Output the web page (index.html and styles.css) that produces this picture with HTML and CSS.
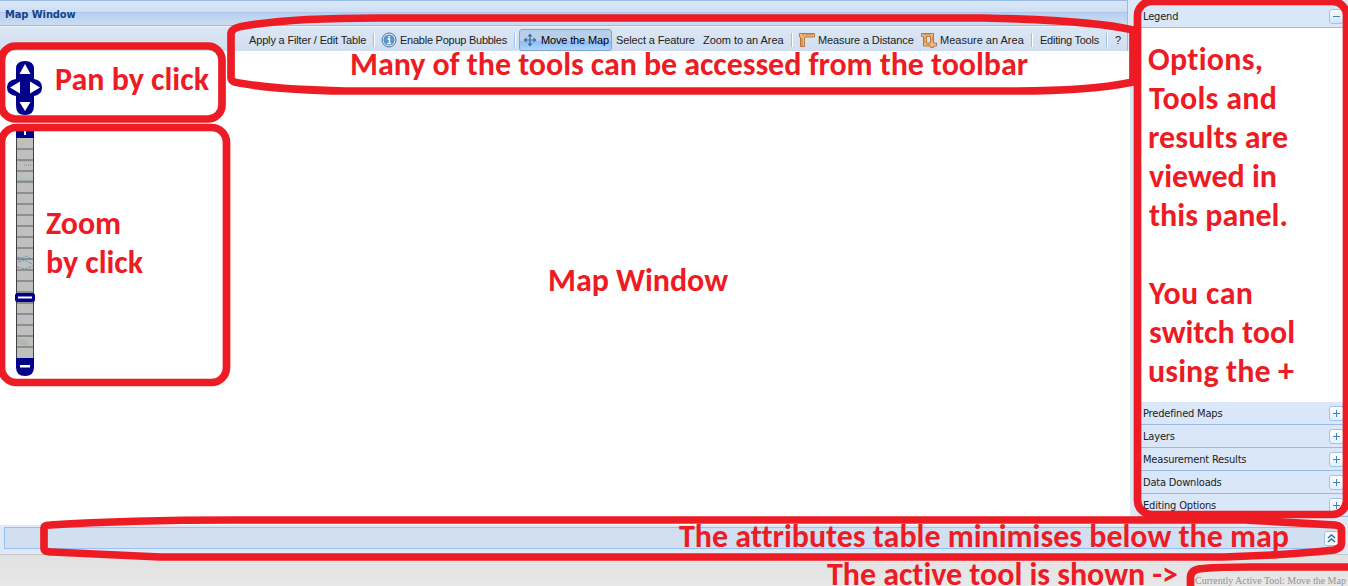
FILE: index.html
```html
<!DOCTYPE html>
<html lang="en">
<head>
<meta charset="utf-8">
<title>Map Window</title>
<link rel="stylesheet" href="styles.css">
</head>
<body>
<div class="app">
  <div class="main">
    <section class="map-panel">
      <header class="titlebar">Map Window</header>
      <nav class="toolbar">
        <span class="tool w-filter"><span>Apply a Filter / Edit Table</span></span>
        <i class="sep"></i>
        <span class="tool w-popup">
          <svg class="icon" viewBox="0 0 16 16"><circle cx="8" cy="8" r="7" fill="#e4eff9" stroke="#3f73a6" stroke-width="1"/><circle cx="8" cy="8" r="5.600" fill="#5f93c6"/><path d="M6.500 7H8.500v4.500M6.300 11.500h3.700M7.300 4.800h1.700" fill="none" stroke="#fff" stroke-width="1.400"/></svg>
          <span>Enable Popup Bubbles</span></span>
        <i class="sep"></i>
        <span class="tool w-move active">
          <svg class="icon" viewBox="0 0 16 16"><path d="M8 3v10M3 8h10" stroke="#386a9b" stroke-width="1.200"/><path d="M8 1.500l2.500 3h-5zM8 14.500l2.500-3h-5zM1.500 8l3-2.500v5zM14.500 8l-3-2.500v5z" fill="#386a9b"/></svg>
          <span>Move the Map</span></span>
        <span class="tool w-select"><span>Select a Feature</span></span>
        <span class="tool w-zoom"><span>Zoom to an Area</span></span>
        <i class="sep"></i>
        <span class="tool w-distance">
          <svg class="icon" viewBox="0 0 16 16"><path d="M.5 1.500h15v3.500h-10v9.500h-4v-9.500h-1z" fill="#edbd83" stroke="#bd763a"/><path d="M4 2v2M7 2v1.500M9 2v1.500M11 2v1.500M13 2v1.500M2 7h2M2 9h2M2 11h2M2 13h2" stroke="#a66329" stroke-width=".8"/></svg>
          <span>Measure a Distance</span></span>
        <span class="tool w-area">
          <svg class="icon" viewBox="0 0 16 16"><path d="M.5 1.500h12v9.500h3v3h-3v1.500h-3v-1.500h-7V4.500h-2zM5.500 4.500v6.500h4V4.500z" fill="#edbd83" fill-rule="evenodd" stroke="#bd763a"/><path d="M3 2v1M5 2v1.500M7 2v1M9 2v1.500M3 6h1.500M3 8h1M3 10h1.500M6 12v1M8 12v1.500M11 5h1M10.500 7h1.500M11 9h1" stroke="#a66329" stroke-width=".8"/></svg>
          <span>Measure an Area</span></span>
        <i class="sep"></i>
        <span class="tool w-editing"><span>Editing Tools</span></span>
        <i class="sep"></i>
        <span class="tool w-help"><span>?</span></span>
      </nav>
      <div class="map">
        <svg class="controls" viewBox="0 1 50 340">
          <path d="M16 20v-1q0-8 9-8t9 8v10q8 1 8 8.500t-8 8.500V56q0 9-9 9t-9-9V46q-9-1-9-8.500T16 29z" fill="#00008b"/>
          <path d="M25 14l5.500 10h-11zM25 61l5.500-9h-11zM10 37.500l10-6v12zM40 37.500l-10-6v12z" fill="#fff"/>
          <path d="M16 88v-8q0-6 9-6t9 6v8zM16 308h18v9q0 9-9 9t-9-9z" fill="#00008b"/>
          <path d="M24 75h2v10h-2zM20.500 79h9v2h-9zM20 315h10v2.500H20z" fill="#fff"/>
          <path d="M16 88h18v220H16z" fill="#bfbfbf"/>
          <path d="M17 97l5-3 4-6M17 160l8-3 7-7M24 254l9 3" fill="none" stroke="#c9bd88" stroke-dasharray="2 1"/>
          <path d="M20 111h12M24 115h7" stroke="#8a8a8a" stroke-dasharray="1 1"/>
          <path d="M17 207l5 1 4-2 6 3M18 212l7-2 7 4M17 217l8 2 8-3" fill="none" stroke="#729aaa" stroke-dasharray="3 1"/>
          <path d="M17 288l11 3v5l-11-2z" fill="#b0b9ad"/>
          <path d="M17 99h16m-16 11h16m-16 11h16m-16 11h16m-16 11h16m-16 11h16m-16 11h16m-16 11h16m-16 11h16m-16 11h16m-16 11h16m-16 11h16m-16 11h16m-16 11h16m-16 11h16m-16 11h16m-16 11h16m-16 11h16m-16 11h16" stroke="#7f7f7f" stroke-width="1.700"/>
          <path d="M17 131h16M17 209h16" stroke="#6d94a4"/>
          <path d="M16.500 88v220M33.500 88v220" stroke="#424242"/>
          <rect x="15" y="243" width="20" height="9" rx="2.500" fill="#00008b"/><path d="M18 246.500h14v2H18z" fill="#fff"/>
        </svg>
      </div>
    </section>
    <aside class="side">
      <div class="row"><span>Legend</span><b class="toggle minus"></b></div>
      <div class="legend-body"></div>
      <div class="row"><span>Predefined Maps</span><b class="toggle"></b></div>
      <div class="row"><span>Layers</span><b class="toggle"></b></div>
      <div class="row"><span>Measurement Results</span><b class="toggle"></b></div>
      <div class="row"><span>Data Downloads</span><b class="toggle"></b></div>
      <div class="row"><span>Editing Options</span><b class="toggle"></b></div>
    </aside>
  </div>
  <div class="attributes"><div class="collapsed">
    <svg class="expand" viewBox="0 0 15 15"><rect x=".5" y=".5" width="14" height="14" rx="2" fill="#f3f8fe" stroke="#a3c2ea"/><path d="M4 7l3.500-3L11 7M4 11l3.500-3 3.500 3" fill="none" stroke="#386c9b" stroke-width="1.500"/></svg>
  </div></div>
  <footer class="status"><span>Currently Active Tool: Move the Map</span></footer>

  <svg class="notes" viewBox="0 0 1348 586">
    <g class="outlines">
      <rect x="1.500" y="46" width="220.500" height="73" rx="14"/>
      <rect x="1.500" y="127.500" width="225" height="255" rx="15"/>
      <path d="M231 78V34Q231 28 244 26Q290 18 377 18H983Q1090 20 1133 30V82Q1090 91 1016 91H345Q280 90 239 83Q231 82 231 78Z"/>
      <rect x="1137.500" y="1.500" width="209" height="513" rx="14"/>
      <path d="M44 548V528Q44 525 50 525Q130 520 233 520H1245L1335 525Q1341.500 526 1341.500 530V543Q1341.500 548 1334 550Q1290 555 1224 557H160L52 552Q44 552 44 548Z"/>
      <path d="M1190.500 590V577Q1191 569 1203 568.500Q1220 567 1250 567H1352"/>
    </g>
    <g class="captions">
      <text x="55" y="90" textLength="154">Pan by click</text>
      <text x="46" y="234" textLength="75">Zoom</text>
      <text x="46" y="273" textLength="97">by click</text>
      <text x="350" y="75" textLength="678">Many of the tools can be accessed from the toolbar</text>
      <text x="548" y="291" textLength="180">Map Window</text>
      <text x="1148" y="70" textLength="115">Options,</text>
      <text x="1149" y="109" textLength="128">Tools and</text>
      <text x="1148" y="148" textLength="140">results are</text>
      <text x="1149" y="187" textLength="128">viewed in</text>
      <text x="1149" y="226" textLength="139">this panel.</text>
      <text x="1149" y="304" textLength="104">You can</text>
      <text x="1149" y="343" textLength="146">switch tool</text>
      <text x="1148" y="382" textLength="146">using the +</text>
      <text x="679" y="547" textLength="610">The attributes table minimises below the map</text>
      <text x="827" y="585" textLength="351">The active tool is shown -&gt;</text>
    </g>
  </svg>
</div>
</body>
</html>
```
FILE: styles.css
```css
* { box-sizing: border-box; }
body { margin: 0; }
.app {
  position: relative;
  width: 1348px;
  height: 586px;
  overflow: hidden;
  display: flex;
  flex-direction: column;
  background: #dfe8f6;
  font: 11px/14px "Liberation Sans", Arial, sans-serif;
}
.main { display: flex; height: 525px; }
.map-panel { width: 1130px; display: flex; flex-direction: column; }
.titlebar {
  width: 1128px;
  height: 26px;
  padding: 6px 5px;
  border: solid #99bbe8;
  border-width: 1px 1px 1px 0;
  background: linear-gradient(#dae7f6, #cddef3 11px, #abc7ec 11px, #abc7ec 12px, #b8cfee 12px, #cbddf3);
  color: #15428b;
  font: bold 11px/15px "DejaVu Sans Condensed", Tahoma, sans-serif;
  letter-spacing: -.08px;
}
.toolbar {
  width: 1128px;
  height: 25px;
  padding: 1px 0 0 243px;
  display: flex;
  align-items: center;
  border-top: 1px solid #e9f1fb;
  border-right: 1px solid #99bbe8;
  background: linear-gradient(#dce7f4, #d0def0);
  color: #222;
  letter-spacing: -.12px;
}
.tool {
  height: 22px;
  display: flex;
  align-items: center;
  gap: 3px;
  padding-left: 6px;
  white-space: nowrap;
  flex: none;
}
.icon { width: 16px; height: 16px; flex: none; }
.active {
  margin-left: 3px;
  border: 1px solid #82a4cb;
  border-radius: 3px;
  background: linear-gradient(#b8cfea 0 55%, #8cbdf3 56%, #aed4fc);
  color: #000;
}
.w-filter { width: 130px; letter-spacing: -.16px; }
.w-popup { width: 139px; letter-spacing: -.25px; }
.w-move { width: 93px; padding-left: 2px; letter-spacing: -.15px; }
.w-select { width: 86px; padding-left: 4px; }
.w-zoom { width: 93px; padding-left: 5px; letter-spacing: -.05px; }
.w-distance { width: 122px; }
.w-area { width: 116px; letter-spacing: 0; }
.w-editing { width: 73px; padding-left: 7px; letter-spacing: -.25px; }
.w-help { width: 14px; padding-left: 7px; }
.sep {
  width: 2px;
  height: 14px;
  flex: none;
  border-left: 1px solid #98c0f4;
  border-right: 1px solid #fff;
}
.map { height: 474px; background: #fff; }
.controls { display: block; width: 50px; height: 340px; }
.side {
  width: 214px;
  margin-left: 4px;
  padding-top: 5px;
  display: flex;
  flex-direction: column;
  font: 11px/14px "DejaVu Sans Condensed", Tahoma, sans-serif;
  color: #222;
}
.row {
  height: 23px;
  flex: none;
  display: flex;
  align-items: center;
  justify-content: space-between;
  margin-left: 4px;
  padding: 0 4px 0 5px;
  border-bottom: 1px solid #99bbe8;
  background: #d9e7f8;
  letter-spacing: -.18px;
}
.row span { padding-top: 2px; }
.legend-body { height: 374px; flex: none; margin-left: 4px; background: #fff; }
.toggle {
  width: 15px;
  height: 15px;
  border: 1px solid #a3c2ea;
  border-radius: 3px;
  background:
    linear-gradient(#447fb7, #447fb7) center / 7px 1px no-repeat,
    linear-gradient(#447fb7, #447fb7) center / 1px 7px no-repeat,
    linear-gradient(#fff, #e3f0fc);
}
.minus {
  background:
    linear-gradient(#447fb7, #447fb7) center / 7px 1px no-repeat,
    linear-gradient(#fff, #cfe3f8);
}
.attributes { height: 29px; padding: 2px 4px 5px; }
.collapsed {
  height: 22px;
  display: flex;
  justify-content: flex-end;
  padding: 3px 4px;
  border: 1px solid #98c0f4;
  background: #d2dff0;
}
.expand { width: 15px; height: 15px; }
.status {
  height: 32px;
  display: flex;
  justify-content: flex-end;
  align-items: flex-end;
  border-top: 1px solid #c5c5c5;
  background: linear-gradient(#e1e1e1, #e8e8e8);
  color: #929292;
  font: 10px/10px "Liberation Serif", "Times New Roman", serif;
}
.status span { width: 153px; white-space: nowrap; letter-spacing: -.02px; }
.notes { position: absolute; left: 0; top: 0; width: 1348px; height: 586px; }
.outlines { fill: none; stroke: #ed1c24; stroke-width: 7.7px; }
.captions { fill: #ed1c24; font: bold 32px Carlito, Lato, sans-serif; font-variant-ligatures: none; }
```
